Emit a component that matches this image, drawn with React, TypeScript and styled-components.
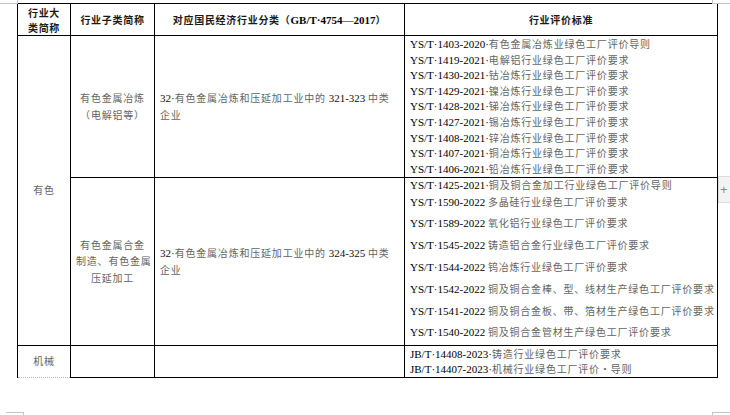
import styled, { createGlobalStyle } from "styled-components";

const GlobalStyle = createGlobalStyle`
  html, body {
    margin: 0;
    padding: 0;
    background: #fff;
  }
  body {
    font-family: "Liberation Serif", "Noto Sans CJK SC", serif;
    color: #111;
  }
`;

const Page = styled.div`
  position: relative;
  width: 730px;
  height: 415px;
  overflow: hidden;
  box-sizing: border-box;
  padding: 3px 0 0 17px;
`;

const Table = styled.table`
  width: 700px;
  border-collapse: collapse;
  table-layout: fixed;
  font-size: 11px;
`;

const Th = styled.th`
  height: 31px;
  padding: 0;
  border: 1px solid #000;
  text-align: center;
  vertical-align: middle;
  font-family: "Noto Sans CJK SC", sans-serif;
  font-weight: 700;
  font-size: 10px;
  letter-spacing: 0.7px;
  line-height: 15px;
  color: #1a1a1a;
`;

const HeadLatin = styled.span`
  font-family: "Liberation Serif", serif;
  font-size: 11px;
  letter-spacing: 0;
  font-weight: 700;
  color: #000;
`;

const Td = styled.td<{ $align?: "left" | "center"; $valign?: "top" | "middle"; $dotted?: boolean; $h?: number }>`
  height: ${p => (p.$h ? `${p.$h}px` : "auto")};
  padding: 0 5px;
  border: 1px solid #000;
  ${p => (p.$dotted ? "border-bottom: 1px dotted #b8b8b8;" : "")}
  text-align: ${p => p.$align ?? "left"};
  vertical-align: ${p => p.$valign ?? "middle"};
  line-height: 15.5px;
  white-space: nowrap;
`;

const Han = styled.span`
  font-family: "Noto Sans CJK SC", sans-serif;
  font-size: 10px;
  letter-spacing: 0.8px;
  color: #646464;
`;

const StdLine = styled.div<{ $h: number }>`
  height: ${p => p.$h}px;
  line-height: ${p => p.$h}px;
  white-space: nowrap;
  color: #000;
`;

const AddButton = styled.button`
  position: absolute;
  left: 718px;
  top: 176px;
  width: 14px;
  height: 27px;
  padding: 0 0 0 1px;
  border: 1px solid #dcdcdc;
  border-right: none;
  background: #f3f3f3;
  color: #8a8a8a;
  font-family: "Liberation Sans", sans-serif;
  font-size: 13px;
  line-height: 25px;
  text-align: left;
`;

type Corner = "tl" | "tr" | "bl" | "br";

const cornerCss: Record<Corner, string> = {
  tl: "left: 0; top: 0; width: 17px; height: 3px; border-right: 1px solid #c4c4c4; border-bottom: 1px solid #c4c4c4;",
  tr: "left: 712px; top: 0; width: 18px; height: 3px; border-left: 1px solid #c4c4c4; border-bottom: 1px solid #c4c4c4;",
  bl: "left: 6px; top: 412px; width: 17px; height: 3px; border-top: 1px solid #c4c4c4; border-right: 1px solid #c4c4c4;",
  br: "left: 712px; top: 412px; width: 18px; height: 3px; border-top: 1px solid #c4c4c4; border-left: 1px solid #c4c4c4;",
};

const CropMark = styled.div<{ $corner: Corner }>`
  position: absolute;
  ${p => cornerCss[p.$corner]}
`;

interface Standard {
  code: string;
  name: string;
  h: number;
}

const smelting: Standard[] = [
  { code: "YS/T·1403-2020·", name: "有色金属冶炼业绿色工厂评价导则", h: 15.6 },
  { code: "YS/T·1419-2021·", name: "电解铝行业绿色工厂评价要求", h: 15.6 },
  { code: "YS/T·1430-2021·", name: "钴冶炼行业绿色工厂评价要求", h: 15.6 },
  { code: "YS/T·1429-2021·", name: "镍冶炼行业绿色工厂评价要求", h: 15.6 },
  { code: "YS/T·1428-2021·", name: "锑冶炼行业绿色工厂评价要求", h: 15.6 },
  { code: "YS/T·1427-2021·", name: "锡冶炼行业绿色工厂评价要求", h: 15.6 },
  { code: "YS/T·1408-2021·", name: "锌冶炼行业绿色工厂评价要求", h: 15.6 },
  { code: "YS/T·1407-2021·", name: "铜冶炼行业绿色工厂评价要求", h: 15.6 },
  { code: "YS/T·1406-2021·", name: "铅冶炼行业绿色工厂评价要求", h: 15.6 },
];

const alloys: Standard[] = [
  { code: "YS/T·1425-2021·", name: "铜及铜合金加工行业绿色工厂评价导则", h: 14 },
  { code: "YS/T·1590-2022 ", name: "多晶硅行业绿色工厂评价要求", h: 20 },
  { code: "YS/T·1589-2022 ", name: "氧化铝行业绿色工厂评价要求", h: 22 },
  { code: "YS/T·1545-2022 ", name: "铸造铝合金行业绿色工厂评价要求", h: 22 },
  { code: "YS/T·1544-2022 ", name: "钨冶炼行业绿色工厂评价要求", h: 22 },
  { code: "YS/T·1542-2022 ", name: "铜及铜合金棒、型、线材生产绿色工厂评价要求", h: 21.5 },
  { code: "YS/T·1541-2022 ", name: "铜及铜合金板、带、箔材生产绿色工厂评价要求", h: 21.5 },
  { code: "YS/T·1540-2022 ", name: "铜及铜合金管材生产绿色工厂评价要求", h: 21.5 },
];

const machinery: Standard[] = [
  { code: "JB/T·14408-2023·", name: "铸造行业绿色工厂评价要求", h: 15 },
  { code: "JB/T·14407-2023·", name: "机械行业绿色工厂评价·导则", h: 15 },
];

function StandardList({ items }: { items: Standard[] }) {
  return (
    <>
      {items.map(s => (
        <StdLine key={s.code} $h={s.h}>
          {s.code}
          <Han>{s.name}</Han>
        </StdLine>
      ))}
    </>
  );
}

export default function App() {
  return (
    <Page>
      <GlobalStyle />
      <CropMark $corner="tl" />
      <CropMark $corner="tr" />
      <CropMark $corner="bl" />
      <CropMark $corner="br" />
      <Table>
        <colgroup>
          <col style={{ width: 53 }} />
          <col style={{ width: 84 }} />
          <col style={{ width: 250 }} />
          <col style={{ width: 313 }} />
        </colgroup>
        <thead>
          <tr>
            <Th>
              行业大
              <br />
              类简称
            </Th>
            <Th>行业子类简称</Th>
            <Th>
              对应国民经济行业分类（<HeadLatin>GB/T·4754—2017</HeadLatin>）
            </Th>
            <Th>行业评价标准</Th>
          </tr>
        </thead>
        <tbody>
          <tr>
            <Td $align="center" rowSpan={2}>
              <Han>有色</Han>
            </Td>
            <Td $align="center" $h={141}>
              <Han>有色金属冶炼</Han>
              <br />
              <Han>（电解铝等）</Han>
            </Td>
            <Td>
              32·<Han>有色金属冶炼和压延加工业中的</Han> 321-323 <Han>中类</Han>
              <br />
              <Han>企业</Han>
            </Td>
            <Td $valign="top">
              <StandardList items={smelting} />
            </Td>
          </tr>
          <tr>
            <Td $align="center" $h={167}>
              <Han>有色金属合金</Han>
              <br />
              <Han>制造、有色金属</Han>
              <br />
              <Han>压延加工</Han>
            </Td>
            <Td>
              32·<Han>有色金属冶炼和压延加工业中的</Han> 324-325 <Han>中类</Han>
              <br />
              <Han>企业</Han>
            </Td>
            <Td $valign="top">
              <StandardList items={alloys} />
            </Td>
          </tr>
          <tr>
            <Td $align="center" $dotted $h={31}>
              <Han>机械</Han>
            </Td>
            <Td />
            <Td />
            <Td $valign="top">
              <StandardList items={machinery} />
            </Td>
          </tr>
        </tbody>
      </Table>
      <AddButton type="button">+</AddButton>
    </Page>
  );
}
